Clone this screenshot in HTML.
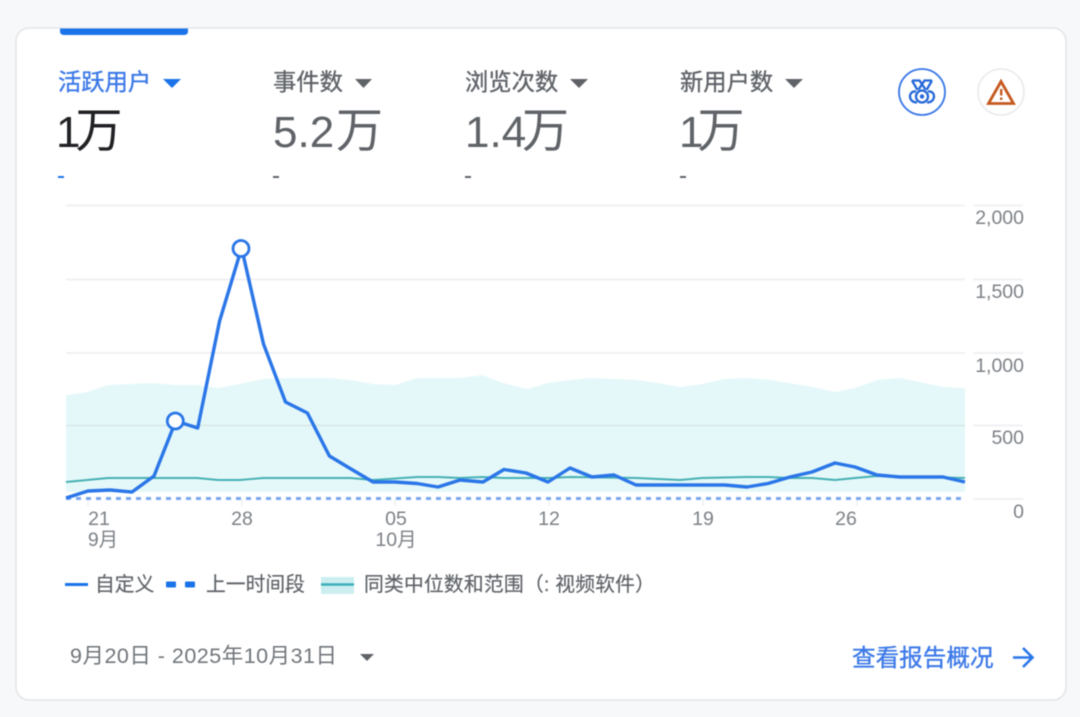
<!DOCTYPE html>
<html>
<head>
<meta charset="utf-8">
<style>
html,body{margin:0;padding:0;background:#f7f8fa;width:1080px;height:717px;overflow:hidden}
svg{display:block;filter:blur(.4px)}
text{font-family:"Liberation Sans","Noto Sans CJK SC",sans-serif}
.lab{font-size:23.300px;fill:#5f6368;stroke:#5f6368;stroke-width:.35px}
.num{font-size:44px;fill:#5f6368}
.wan{font-size:47px}
.ax{font-size:19.500px;fill:#7c8186}
.lg{font-size:19.800px;fill:#5f6368;stroke:#5f6368;stroke-width:.2px}
</style>
</head>
<body>
<svg width="1080" height="717" viewBox="0 0 1080 717" xmlns="http://www.w3.org/2000/svg">
<rect x="16" y="28" width="1050" height="672" rx="13" fill="#fff" stroke="#e3e5e8" stroke-width="1.600"/>
<path d="M60 28.500H188V31Q188 35 184 35H64Q60 35 60 31Z" fill="#1a73e8"/>

<text x="58" y="90" class="lab" style="fill:#3b78e7;stroke:#3b78e7">活跃用户</text>
<path d="M163 79H181L172 88Z" fill="#1a73e8"/>
<text x="273" y="90" class="lab">事件数</text>
<path d="M355 79H372L363.500 88Z" fill="#5f6368"/>
<text x="465" y="90" class="lab">浏览次数</text>
<path d="M570 79H588L579 88Z" fill="#5f6368"/>
<text x="680" y="90" class="lab">新用户数</text>
<path d="M785 79H803L794 88Z" fill="#5f6368"/>

<text y="147" class="num" style="fill:#202124"><tspan x="56">1</tspan><tspan x="75.500" class="wan">万</tspan></text>
<text y="147" class="num"><tspan x="273">5.2</tspan><tspan x="336" class="wan">万</tspan></text>
<text y="147" class="num"><tspan x="465">1.4</tspan><tspan x="522" class="wan">万</tspan></text>
<text y="147" class="num"><tspan x="679">1</tspan><tspan x="697.500" class="wan">万</tspan></text>
<rect x="58" y="176" width="6" height="2" fill="#1a73e8"/>
<rect x="273" y="176" width="6" height="2" fill="#5f6368"/>
<rect x="465" y="176" width="6" height="2" fill="#5f6368"/>
<rect x="680" y="176" width="6" height="2" fill="#5f6368"/>

<circle cx="922" cy="92" r="23" fill="#fff" stroke="#3b78e7" stroke-width="1.800"/>
<g fill="none" stroke="#2468d8" stroke-width="2.300">
<path d="M912 80.500H919.500L925.500 89.500M932 80.500H924.500L918.500 89.500M912 80.500L917.500 90M932 80.500L926.500 90"/>
<circle cx="922" cy="96.500" r="6"/>
<path d="M916 91.500C912 91 910 93.500 910 96.500C910 99.500 912.500 102.500 917 102.500M928 91.500C932 91 934 93.500 934 96.500C934 99.500 931.500 102.500 927 102.500"/>
</g>
<circle cx="922" cy="96.500" r="2.200" fill="#2468d8"/>

<circle cx="1001" cy="92" r="23" fill="#fff" stroke="#e8eaed" stroke-width="1.600"/>
<path d="M1001 81.500L1013.500 103.500H988.500Z" fill="none" stroke="#c5591f" stroke-width="2.800" stroke-linejoin="miter"/>
<rect x="1000" y="89" width="2.400" height="6.500" fill="#c5591f"/>
<rect x="1000" y="97.500" width="2.400" height="2.400" fill="#c5591f"/>

<g stroke="#eceef0" stroke-width="1.400">
<path d="M66 205.500H965M973 205.500H1023"/>
<path d="M66 279.500H965M973 279.500H1023"/>
<path d="M66 353H965M973 353H1023"/>
<path d="M973 425.500H1023"/>
<path d="M973 499H1023"/>
<path d="M88 499V506M242 499V506M395 499V506M549 499V506M703 499V506M857 499V506"/>
</g>

<path d="M66 395L87 392L108 385L130 384L152 383L175 385L197 385L218 388L240 384L263 379L285 378L328 378L350 380L373 384L395 385L417 378L460 378L482 375L503 383L527 389L548 383L570 380L592 378L637 380L658 383L680 387L702 384L725 379L747 378L770 380L813 387L835 392L855 388L877 380L900 378L920 382L943 387L965 388V492H66Z" fill="#e5f8f9"/>
<path d="M66 425.500H965" stroke="#d6e6e7" stroke-width="1.400"/>

<path d="M66 482L108 478L197 478L218 480L240 480L263 478L350 478L373 480L417 477L438 477L460 478L482 477L504 478L548 478L570 477L637 478L680 480L702 478L747 477L768 477L790 478L812 478L835 480L855 478L877 476L965 478" fill="none" stroke="#45b0b3" stroke-width="1.900"/>

<path d="M66 498.500H965" stroke="#7aa8f0" stroke-width="3" stroke-dasharray="5 5"/>

<path d="M66 498L88 491L110 490L132 492L154 476L175.750 421L197.700 428L219.600 321L241.600 248L263.500 344L285.500 402L307.400 413L329.400 456L351 469L373 482L395 482L417 483.500L438 487L460 480L483 482L504 469.500L526 473L548 482L570 468L592 477L614 475L636 485L725 485L747 487L768 483.500L790 477L812 472L835 463L855 467L877 475L900 477L943 477L965 482" fill="none" stroke="#2a76e8" stroke-width="3.400" stroke-linejoin="round"/>
<circle cx="175.300" cy="421" r="8" fill="#fff" stroke="#2a76e8" stroke-width="2.800"/>
<circle cx="241" cy="248.500" r="8" fill="#fff" stroke="#2a76e8" stroke-width="2.800"/>

<g text-anchor="end">
<text x="1024" y="224" class="ax">2,000</text>
<text x="1024" y="298" class="ax">1,500</text>
<text x="1024" y="372" class="ax">1,000</text>
<text x="1024" y="444" class="ax">500</text>
<text x="1024" y="518" class="ax">0</text>
</g>
<g text-anchor="middle">
<text x="99" y="525" class="ax">21</text>
<text x="242" y="525" class="ax">28</text>
<text x="396" y="525" class="ax">05</text>
<text x="549" y="525" class="ax">12</text>
<text x="703" y="525" class="ax">19</text>
<text x="846" y="525" class="ax">26</text>
<text x="103" y="546" class="ax">9月</text>
<text x="396" y="546" class="ax">10月</text>
</g>

<path d="M65 584.500H88" stroke="#1a73e8" stroke-width="3"/>
<rect x="166" y="581.500" width="10" height="6" rx="1" fill="#1a73e8"/>
<rect x="185" y="581.500" width="10" height="6" rx="1" fill="#1a73e8"/>
<rect x="321" y="577" width="33" height="17" fill="#cdeef1"/>
<path d="M321 584.500H354" stroke="#3bafb8" stroke-width="2.400"/>
<text x="95" y="591" class="lg">自定义</text>
<text x="206" y="591" class="lg">上一时间段</text>
<text x="364" y="591" class="lg" style="letter-spacing:.2px">同类中位数和范围（: 视频软件）</text>

<text x="70" y="663" class="lg" style="font-size:21.500px;fill:#70757a;stroke:none" textLength="267" lengthAdjust="spacing">9月20日 - 2025年10月31日</text>
<path d="M360 654H374L367 661Z" fill="#5f6368"/>

<text x="852" y="666" style="font-size:23.600px;fill:#3b78e7;stroke:#3b78e7;stroke-width:.35px">查看报告概况</text>
<path d="M1013 657.500H1031M1023 648L1032.500 657.500L1023 667" fill="none" stroke="#2a76e8" stroke-width="2.600"/>
</svg>
</body>
</html>
